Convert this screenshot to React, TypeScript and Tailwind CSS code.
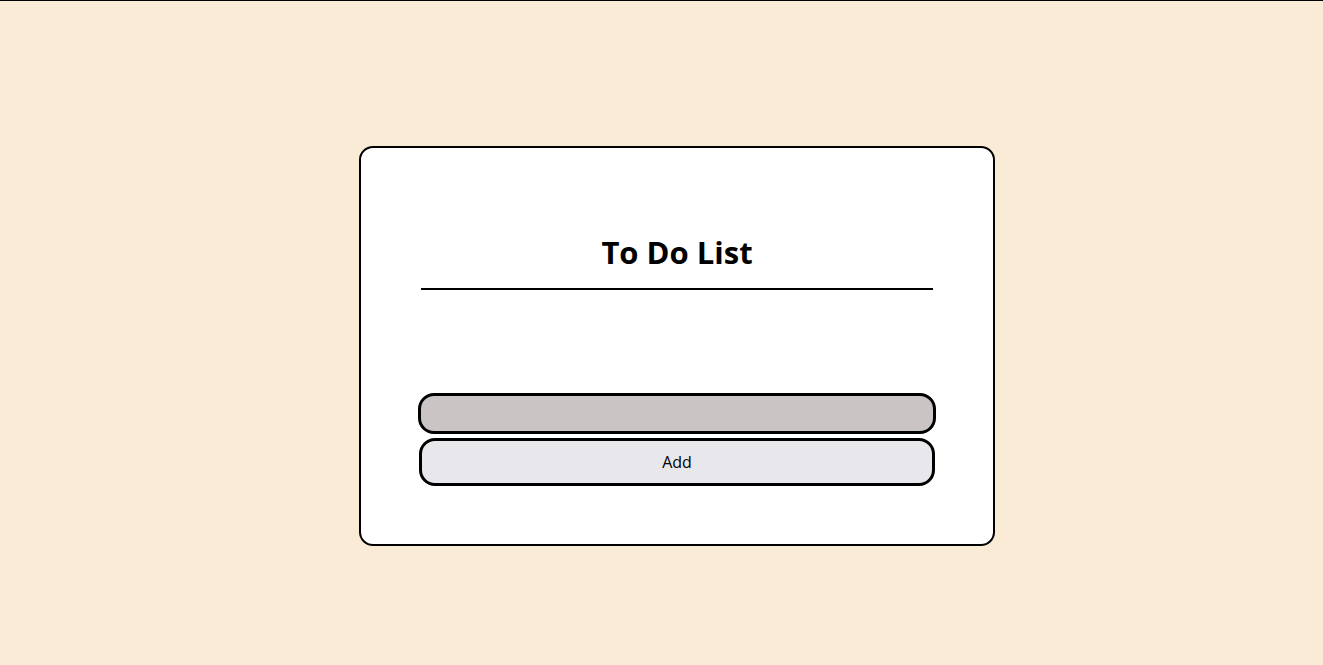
export default function App() {
  return (
    <div
      className="min-h-[665px] border-t border-black bg-[#faebd7] pt-[145px]"
      style={{ fontFamily: '"Open Sans", "Noto Sans", sans-serif' }}
    >
      <div className="flex justify-center pl-[31px]">
        <div className="flex h-[400px] w-[636px] flex-col items-center rounded-[14px] border-2 border-black bg-white px-[57px]">
          <h1 className="mt-[84px] text-[31px] font-bold leading-[40px] text-black">To Do List</h1>
          <div className="mt-[16px] h-[2px] w-[512px] bg-black" />
          <input
            type="text"
            className="mt-[103px] h-[41px] w-[518px] rounded-[16px] border-[3px] border-black bg-[#cac4c4] px-3 outline-none"
          />
          <button className="mt-[4px] h-[48px] w-[516px] rounded-[16px] border-[3px] border-black bg-[#e8e7eb] text-[16px] text-black">
            Add
          </button>
        </div>
      </div>
    </div>
  );
}
